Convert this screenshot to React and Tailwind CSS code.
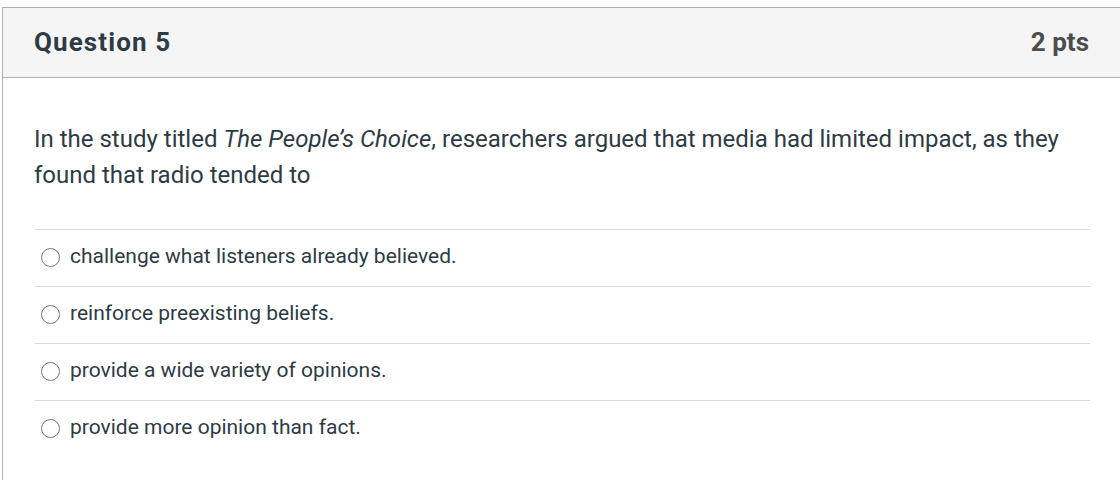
export default function App() {
  const options = [
    "challenge what listeners already believed.",
    "reinforce preexisting beliefs.",
    "provide a wide variety of opinions.",
    "provide more opinion than fact.",
  ];
  return (
    <div className="w-[1120px] h-[480px] overflow-hidden bg-white" style={{ fontFamily: "Roboto, 'Liberation Sans', sans-serif" }}>
      <div className="ml-[2px] mt-[7px] border-l border-t border-[#b0b0b0] h-[480px]">
        <div className="h-[70px] bg-[#f5f5f5] border-b border-[#b0b0b0] flex items-center justify-between pl-[31px] pr-[31px] pb-[2px]">
          <div className="text-[26px] font-bold text-[#2d3b45] leading-none tracking-[1.1px]">Question 5</div>
          <div className="text-[26px] font-bold text-[#4d4d4d] leading-none">2 pts</div>
        </div>
        <div className="pl-[31px] pr-[30px] pt-[43px]">
          <p className="text-[24px] leading-[36px] text-[#2d3b45]">
            In the study titled <em>The People’s Choice</em>, researchers argued that media had limited impact, as they found that radio tended to
          </p>
          <div className="mt-[36px] ml-[1px]">
            {options.map((o) => (
              <div key={o} className="border-t border-[#dadada] h-[57px] flex items-center pl-[6px] pb-[2px]">
                <span className="w-[19px] h-[19px] rounded-full border-[1.5px] border-[#777] mr-[10px] shrink-0"></span>
                <span className="text-[21px] text-[#2d3b45]">{o}</span>
              </div>
            ))}
          </div>
        </div>
      </div>
    </div>
  );
}
